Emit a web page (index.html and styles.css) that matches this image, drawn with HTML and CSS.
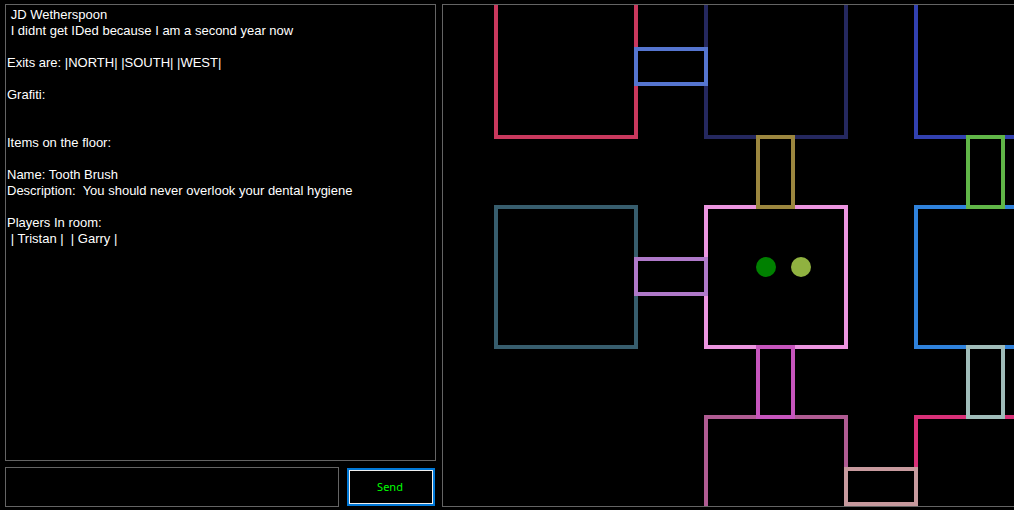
FILE: index.html
```html
<!DOCTYPE html>
<html lang="en">
<head>
<meta charset="utf-8">
<title>Dungeon client</title>
<link rel="stylesheet" href="styles.css">
</head>
<body>
<main class="client">
  <section class="console">
    <pre class="log"> JD Wetherspoon
 I didnt get IDed because I am a second year now

Exits are: |NORTH| |SOUTH| |WEST|

Grafiti:


Items on the floor:

Name: Tooth Brush
Description:  You should never overlook your dental hygiene

Players In room:
 | Tristan |  | Garry |</pre>
    <form class="entry">
      <input class="command" type="text" aria-label="Command">
      <button class="send" type="button">Send</button>
    </form>
  </section>
  <section class="map">
    <svg class="rooms" role="img" aria-label="Map">
      <g class="outline">
        <rect x="53" y="-8" width="140" height="140" stroke="#c9385d"/>
        <rect x="263" y="-8" width="140" height="140" stroke="#25285f"/>
        <rect x="473" y="-8" width="140" height="140" stroke="#3241b0"/>
        <rect x="53" y="202" width="140" height="140" stroke="#375d6d"/>
        <rect x="263" y="202" width="140" height="140" stroke="#ec95e0"/>
        <rect x="473" y="202" width="140" height="140" stroke="#2f82dc"/>
        <rect x="263" y="412" width="140" height="140" stroke="#af5b92"/>
        <rect x="473" y="412" width="140" height="140" stroke="#d93078"/>
        <rect x="193" y="44" width="70" height="35" stroke="#5575cf"/>
        <rect x="193" y="254" width="70" height="35" stroke="#af79c9"/>
        <rect x="403" y="464" width="70" height="35" stroke="#c79a9e"/>
        <rect x="315" y="132" width="35" height="70" stroke="#9c873f"/>
        <rect x="315" y="342" width="35" height="70" stroke="#c655bd"/>
        <rect x="525" y="132" width="35" height="70" stroke="#60b647"/>
        <rect x="525" y="342" width="35" height="70" stroke="#a0bdba"/>
      </g>
      <circle cx="323" cy="262" r="10" fill="#008000"/>
      <circle cx="358" cy="262" r="10" fill="#90b240"/>
    </svg>
  </section>
</main>
</body>
</html>
```
FILE: styles.css
```css
* {
  box-sizing: border-box;
}

body {
  margin: 0;
  background: #000;
  color: #fff;
  font-family: "Liberation Sans", Arial, sans-serif;
}

.client {
  display: grid;
  grid-template-columns: 431fr 572fr;
  gap: 6px;
  height: 100vh;
  padding: 4px 0 3px 5px;
}

.console {
  display: flex;
  flex-direction: column;
  gap: 6px;
  min-width: 0;
  min-height: 0;
}

.log {
  flex: 1;
  min-height: 0;
  margin: 0;
  padding: 2px 1px;
  overflow: auto;
  border: 1px solid #646464;
  font-family: inherit;
  font-size: 13px;
  line-height: 16px;
  white-space: pre-wrap;
}

.entry {
  display: flex;
  align-items: center;
  gap: 8px;
  padding-right: 1px;
}

.command {
  flex: 1;
  min-width: 0;
  height: 40px;
  padding: 0 4px;
  border: 1px solid #646464;
  outline: none;
  background: #000;
  color: #fff;
  font: inherit;
  font-size: 13px;
}

.send {
  width: 88px;
  height: 38px;
  padding: 0 2px 2px 0;
  border: 2px solid #0078d7;
  box-shadow: inset 0 0 0 1px #f0f0f0;
  background: #000;
  color: #00ff00;
  font-family: "Noto Sans", "Open Sans", sans-serif;
  font-size: 11px;
}

.map {
  min-width: 0;
  min-height: 0;
  overflow: hidden;
  border: 1px solid #646464;
  border-right: 0;
}

.rooms {
  display: block;
  width: 100%;
  height: 100%;
}

.outline {
  fill: none;
  stroke-width: 4;
  shape-rendering: crispEdges;
}
```
